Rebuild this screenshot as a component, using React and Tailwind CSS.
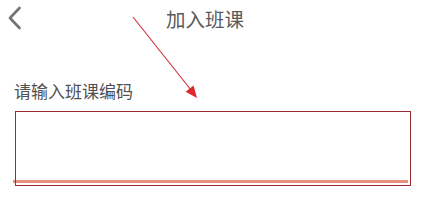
import React from "react";

const App = () => {
  return (
    <div
      className="relative w-[424px] h-[218px] bg-white overflow-hidden"
      style={{ fontFamily: '"Noto Sans CJK SC", "Noto Sans", sans-serif' }}
    >
      {/* Header */}
      <div className="relative flex items-center justify-center h-[36px]">
        <button className="absolute left-[6px] top-[5px] w-[16px] h-[26px] flex items-center justify-center">
          <svg width="14" height="24" viewBox="0 0 14 24" fill="none">
            <polyline
              points="12.5,2 3,12 12.5,22"
              stroke="#737373"
              strokeWidth="2.6"
              strokeLinecap="round"
              strokeLinejoin="round"
            />
          </svg>
        </button>
        <h1 className="text-[19.5px] leading-none text-[#5a5a5a] mr-[14px] mt-[1px]">加入班课</h1>
      </div>

      {/* Form */}
      <div className="px-[13px] pt-[46px]">
        <label className="block text-[17px] leading-none text-[#505050] ml-[1px]">
          请输入班课编码
        </label>
        <div className="relative mt-[12px]">
          <div className="h-[72px] w-[395px] border-b-[3px] border-[#e8907f]" />
          {/* annotation box */}
          <div className="absolute left-[2px] top-0 w-[396px] h-[75px] border border-[#9c2a2e]" />
        </div>
      </div>

      {/* annotation arrow */}
      <svg
        className="absolute left-0 top-0 pointer-events-none"
        width="424"
        height="218"
        viewBox="0 0 424 218"
      >
        <line x1="133" y1="17" x2="191" y2="90" stroke="#d42a30" strokeWidth="1.1" />
        <polygon points="197,98 185.6,91.7 193.5,85.5" fill="#e0262e" />
      </svg>
    </div>
  );
};

export default App;
